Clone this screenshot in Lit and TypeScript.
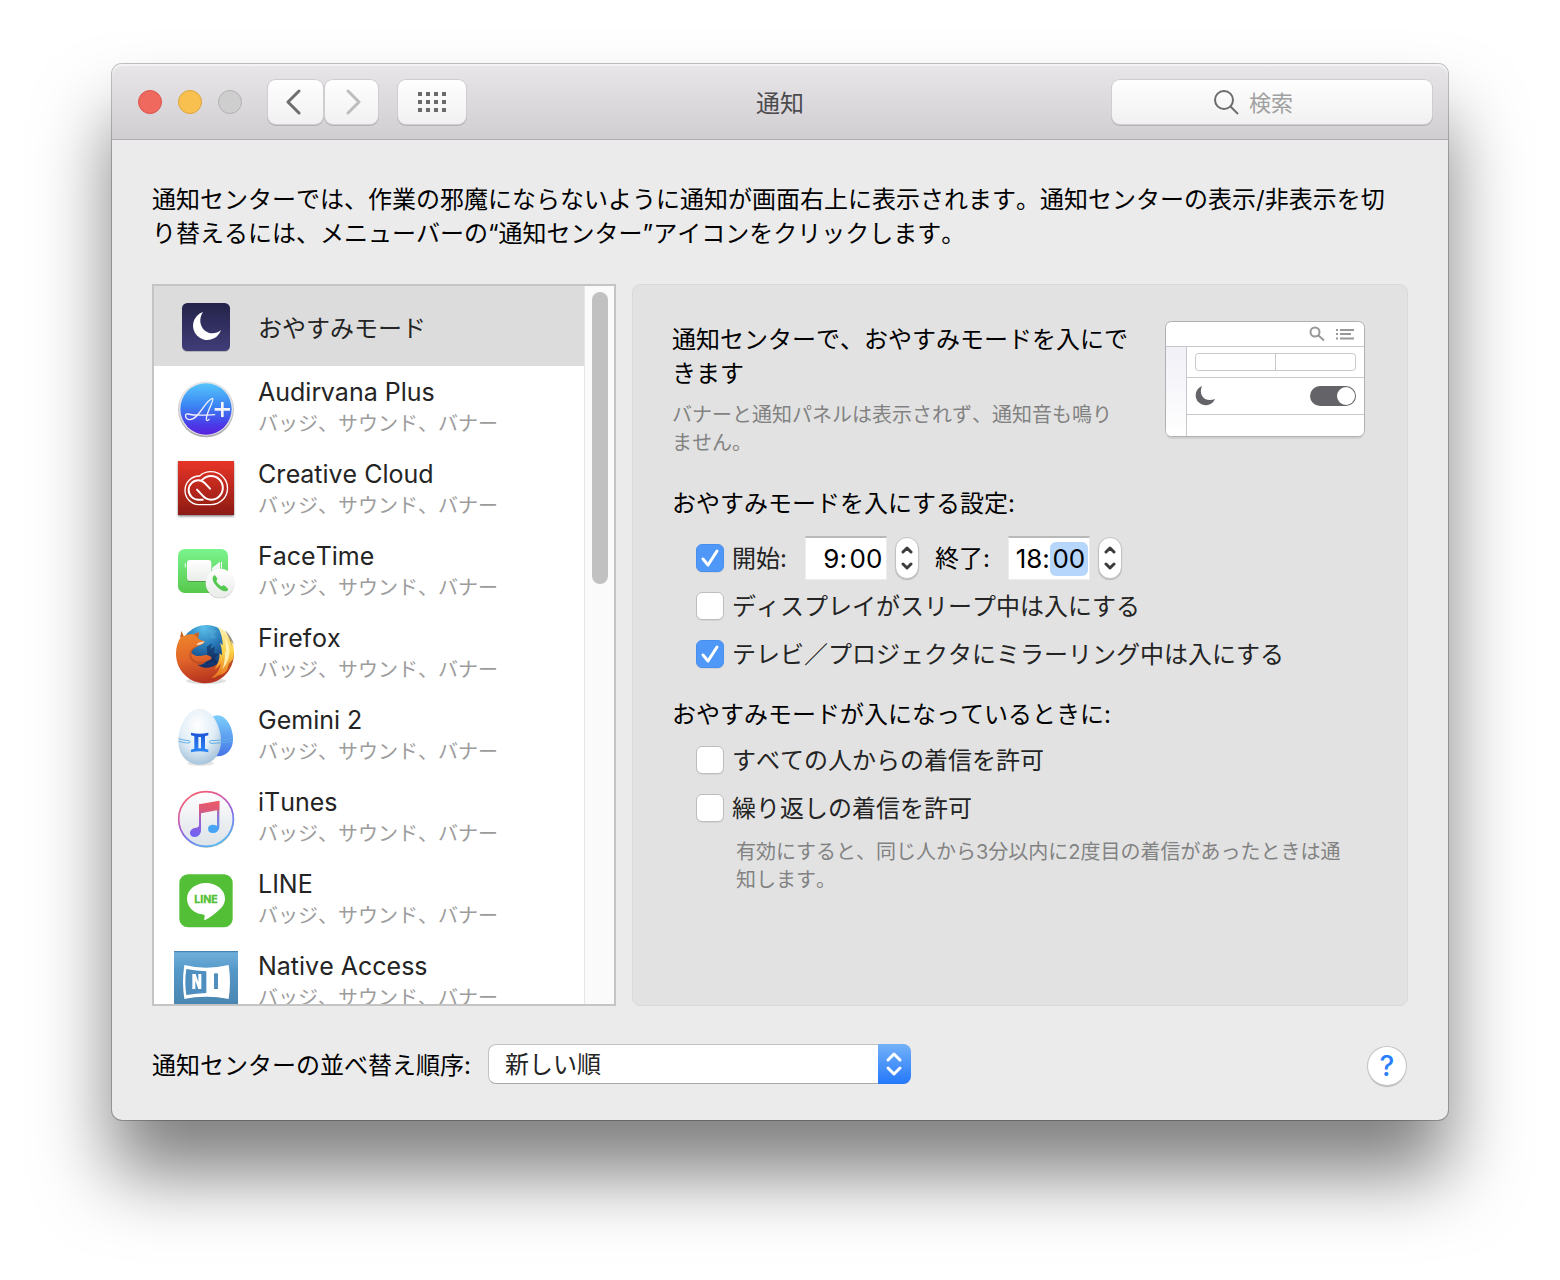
import { LitElement, html, css, svg } from "lit";
import { customElement, state } from "lit/decorators.js";

const icons: Record<string, unknown> = {
  dnd: svg`
    <svg viewBox="72 45 192 192" aria-hidden="true">
      <defs>
        <linearGradient id="dnd-bg" x1="0" y1="0" x2="0" y2="1">
          <stop offset="0" stop-color="#24234a" /><stop offset="1" stop-color="#403d78" />
        </linearGradient>
      </defs>
      <rect x="96" y="72" width="144" height="144" rx="16" fill="#000" opacity=".18" />
      <rect x="96" y="69" width="144" height="144" rx="16" fill="url(#dnd-bg)" />
      <path d="M159 96a43 43 0 1 0 54 54c-14 12-34 13-48 2c-16-13-19-37-6-56z" fill="#fff" />
    </svg>`,
  audirvana: svg`
    <svg viewBox="72 291 192 192" aria-hidden="true">
      <defs>
        <linearGradient id="au-bg" x1="0" y1="0" x2="0" y2="1">
          <stop offset="0" stop-color="#55c5fb" /><stop offset=".45" stop-color="#3b83f3" />
          <stop offset=".8" stop-color="#4a3be8" /><stop offset="1" stop-color="#5a22dc" />
        </linearGradient>
        <linearGradient id="au-ring" x1="0" y1="0" x2="0" y2="1">
          <stop offset="0" stop-color="#ededed" /><stop offset="1" stop-color="#a9a9ad" />
        </linearGradient>
      </defs>
      <circle cx="168" cy="388" r="84" fill="url(#au-ring)" />
      <circle cx="168" cy="386" r="81" fill="#e4e4e8" />
      <circle cx="168" cy="387" r="77" fill="url(#au-bg)" />
      <path d="M194 404c-28 2-60 3-80-2c-12-3-9 17 6 17c26 0 46-60 68-64c6 4-19 42-19 62c0 6 4 6 8 1" fill="none" stroke="#f0f0fa" stroke-width="4" stroke-linecap="round" stroke-linejoin="round" />
      <path d="M194 388h46M217 366v45" stroke="#f4f4f8" stroke-width="8" />
    </svg>`,
  cc: svg`
    <svg viewBox="72 537 192 192" aria-hidden="true">
      <defs>
        <linearGradient id="cc-bg" x1="0" y1="0" x2="0" y2="1">
          <stop offset="0" stop-color="#e83427" /><stop offset="1" stop-color="#8c1b13" />
        </linearGradient>
        <filter id="cc-sh" x="-10%" y="-10%" width="120%" height="125%">
          <feDropShadow dx="0" dy="4" stdDeviation="3" flood-opacity=".5" />
        </filter>
      </defs>
      <rect x="84" y="543" width="168" height="162" fill="url(#cc-bg)" filter="url(#cc-sh)" />
      <g fill="none" stroke="#fff" stroke-linecap="round">
        <path d="M147 674a43 43 0 1 1 2-86c8-8 20-13 34-13a49 49 0 0 1 0 99z" stroke-width="4" />
        <path d="M158 659h-13a29 29 0 1 1 0-58c10 0 15 4 21 10l14 15" stroke-width="6" />
        <path d="M155 601c8-9 17-13 28-13a35 35 0 0 1 0 71c-11 0-19-5-25-12l-17-18" stroke-width="6" />
      </g>
    </svg>`,
  facetime: svg`
    <svg viewBox="72 33 192 192" aria-hidden="true">
      <defs>
        <linearGradient id="ft-bg" x1="0" y1="0" x2="0" y2="1">
          <stop offset="0" stop-color="#7af48d" /><stop offset="1" stop-color="#58c84c" />
        </linearGradient>
        <linearGradient id="ft-cam" x1="0" y1="0" x2="0" y2="1">
          <stop offset="0" stop-color="#fff" /><stop offset="1" stop-color="#e9ece9" />
        </linearGradient>
        <filter id="ft-sh" x="-20%" y="-20%" width="140%" height="140%">
          <feDropShadow dx="0" dy="2" stdDeviation="2" flood-opacity=".35" />
        </filter>
      </defs>
      <rect x="84" y="57" width="150" height="132" rx="20" fill="url(#ft-bg)" />
      <path d="M106 100v12" stroke="#fff" stroke-width="3" />
      <g fill="url(#ft-cam)">
        <rect x="111" y="90" width="73" height="63" rx="9" filter="url(#ft-sh)" />
        <path d="M186 114l24-19v40h-24z" />
        <path d="M213 96h3v24h-3z" />
        <circle cx="210" cy="159" r="43" filter="url(#ft-sh)" />
      </g>
      <path d="M190 139c-6 8 1 21 11 31s23 17 31 12c3-2 3-5 0-8l-8-7c-3-2-5-1-8 2c-6-1-15-10-17-17c3-3 4-5 2-8l-5-7c-2-3-4-1-6 2z" fill="#55c850" />
    </svg>`,
  firefox: svg`
    <svg viewBox="0 3 192 192" aria-hidden="true">
      <defs>
        <radialGradient id="fx-globe" cx=".45" cy=".05" r=".85">
          <stop offset="0" stop-color="#5cc0ea" /><stop offset=".4" stop-color="#2b7fbd" />
          <stop offset=".75" stop-color="#164680" /><stop offset="1" stop-color="#101d50" />
        </radialGradient>
        <linearGradient id="fx-body" x1="0" y1="0" x2=".2" y2="1">
          <stop offset="0" stop-color="#ef8a2a" /><stop offset=".55" stop-color="#e2662a" />
          <stop offset="1" stop-color="#b8361f" />
        </linearGradient>
        <linearGradient id="fx-tail" x1="0" y1="0" x2="0" y2="1">
          <stop offset="0" stop-color="#fdf3c0" /><stop offset=".5" stop-color="#fbd044" />
          <stop offset="1" stop-color="#e8701f" />
        </linearGradient>
      </defs>
      <ellipse cx="96" cy="177" rx="60" ry="10" fill="#000" opacity=".12" />
      <circle cx="97" cy="88" r="79" fill="url(#fx-globe)" />
      <path d="M98 74l16-10l-5 16l14-6l-4 20l16 2l-12 12l4 16l-16-4l-16 8l6-20z" fill="#0e1c4c" opacity=".5" />
      <path d="M100 26l16-6l12 8l-8 10l10 8l-14 6l-10-8l4-8z" fill="#63b5dd" opacity=".3" />
      <path d="M22 27l7 16c10-6 20-7 30-6l16-6l-3 18c6 5 13 7 20 9c-2 8-11 11-20 14c-10 4-18 11-20 20c8 10 20 12 32 9c12-4 23-3 29 6c-3 9-12 7-19 13c-7 8-16 9-24 8c24 17 58 12 74-22c8-19 8-40 4-58c18 14 30 33 32 52c-4 48-40 84-84 84c-51 0-90-39-90-89c0-20 5-35 14-49z" fill="url(#fx-body)" />
      <path d="M130 13c31 14 50 43 50 76c0 28-13 52-34 68l-18 9l-16 2c18-13 26-26 28-44c-5 8-10 14-18 18c10-16 15-30 15-48l7 6c0-15-2-28-6-38l8 8c0-20-5-39-16-57z" fill="url(#fx-tail)" />
      <path d="M152 46c13 18 18 38 12 60c-4 16-10 27-19 36c7-18 9-38 7-54l4 4c0-16-1-31-4-46z" fill="#fff6bf" opacity=".85" />
      <path d="M153 24c14 13 23 28 27 44l-9-11l3 17c-5-19-12-33-21-50z" fill="#3d3d46" opacity=".5" />
      <path d="M178 110l-7 20l-13 17l7-22zM146 156l-12 11l-16 6l12-12z" fill="#a63a20" opacity=".8" />
      <path d="M73 62l18-4c-1 6-7 9-16 10l-8 1z" fill="#f8dcc0" />
      <path d="M18 46l4-19l7 16zM59 37l16-6l-3 18c-4-6-8-9-13-12z" fill="#b9521f" opacity=".7" />
      <path d="M72 72c-16 3-27 13-26 28c1 12 10 23 24 25c10 2 18-1 24-8c-12 4-26 3-34-4c-7-6-9-13-8-21c3-9 10-15 20-20z" fill="#a63b1a" opacity=".45" />
    </svg>`,
  gemini: svg`
    <svg viewBox="72 525 192 192" aria-hidden="true">
      <defs>
        <linearGradient id="gm-back" x1="0" y1="0" x2="0" y2="1">
          <stop offset="0" stop-color="#7ccffb" /><stop offset="1" stop-color="#4474e8" />
        </linearGradient>
        <radialGradient id="gm-front" cx=".45" cy=".3" r=".75">
          <stop offset="0" stop-color="#fff" /><stop offset=".55" stop-color="#e1eef7" />
          <stop offset="1" stop-color="#9fbdd6" />
        </radialGradient>
        <linearGradient id="gm-sign" x1="0" y1="0" x2="0" y2="1">
          <stop offset="0" stop-color="#1f55d8" /><stop offset="1" stop-color="#2a86f6" />
        </linearGradient>
      </defs>
      <ellipse cx="152" cy="700" rx="40" ry="8" fill="#000" opacity=".1" />
      <path d="M202 556c27 0 47 37 47 72c0 30-19 51-46 51c-26 0-46-21-46-51c0-35 19-72 45-72z" fill="url(#gm-back)" />
      <path d="M149 536c36 0 64 52 64 97c0 44-28 71-64 71s-64-27-64-71c0-45 28-97 64-97z" fill="url(#gm-front)" />
      <g fill="none" stroke="#64aee8" stroke-width="3">
        <path d="M86 626c10 4 20 5 32 6q4 3 0 7c-12 0-22-2-32-5" />
        <path d="M249 624c-22 6-44 7-68 8q-6 3 0 8c24 0 46-2 68-8" />
      </g>
      <path d="M123 608q26 6 52 0v8q-5 2-10 3v37q5 1 10 3v8q-26-6-52 0v-8q5-2 10-3v-37q-5-1-10-3z" fill="url(#gm-sign)" />
      <path d="M145 621h8v34h-8z" fill="#e6f1fa" />
    </svg>`,
  itunes: svg`
    <svg viewBox="72 21 192 192" aria-hidden="true">
      <defs>
        <linearGradient id="it-ring" x1=".25" y1="0" x2=".75" y2="1">
          <stop offset="0" stop-color="#f4606a" /><stop offset=".3" stop-color="#d65aa8" />
          <stop offset=".6" stop-color="#7d6bf0" /><stop offset="1" stop-color="#4cc3f4" />
        </linearGradient>
        <linearGradient id="it-bg" x1="0" y1="0" x2="0" y2="1">
          <stop offset="0" stop-color="#fefefe" /><stop offset="1" stop-color="#dde3e8" />
        </linearGradient>
        <linearGradient id="it-note" gradientUnits="userSpaceOnUse" x1="180" y1="64" x2="160" y2="172">
          <stop offset="0" stop-color="#ea5a68" /><stop offset=".25" stop-color="#dc5a78" />
          <stop offset=".6" stop-color="#9a5fd0" /><stop offset="1" stop-color="#6f62f6" />
        </linearGradient>
        <linearGradient id="it-note2" gradientUnits="userSpaceOnUse" x1="200" y1="64" x2="196" y2="160">
          <stop offset="0" stop-color="#e85a6a" /><stop offset=".5" stop-color="#8a78d8" />
          <stop offset="1" stop-color="#3fa8f6" />
        </linearGradient>
      </defs>
      <circle cx="169" cy="120" r="84" fill="#000" opacity=".22" />
      <circle cx="168" cy="117" r="82" fill="url(#it-bg)" stroke="url(#it-ring)" stroke-width="5" />
      <path d="M201 90v44c0 6-3 8-9 9c-10 1-17 7-17 16c0 0 0 0 0 0c0-7 1-7 1-8c0 5 5 8 13 8c11 0 19-8 19-19V62z" fill="url(#it-note2)" />
      <ellipse cx="189" cy="146" rx="15" ry="12" fill="#48a4f4" />
      <path d="M147 73l61-11v27l-55 11v51c0 11-8 20-19 20c-9 0-14-5-14-12c0-9 8-15 18-16c6-1 9-3 9-9z" fill="url(#it-note)" />
    </svg>`,
  line: svg`
    <svg viewBox="72 267 192 192" aria-hidden="true">
      <rect x="88" y="283" width="160" height="159" rx="26" fill="#53bf36" />
      <path d="M168 309c32 0 57 21 57 47c0 15-9 27-24 39c-12 10-24 19-36 25c-4 1-2-5-1-10c1-5-2-6-8-7c-26-4-45-24-45-47c0-26 25-47 57-47z" fill="#fff" />
      <text x="168" y="369" text-anchor="middle" class="line-mark">LINE</text>
    </svg>`,
  ni: svg`
    <svg viewBox="72 513 192 192" aria-hidden="true">
      <defs>
        <linearGradient id="ni-bg" x1="0" y1="0" x2="0" y2="1">
          <stop offset="0" stop-color="#72b0dc" /><stop offset=".3" stop-color="#5598c8" />
          <stop offset="1" stop-color="#4580aa" />
        </linearGradient>
      </defs>
      <rect x="72" y="513" width="192" height="192" rx="4" fill="url(#ni-bg)" />
      <path d="M72 515h192" stroke="#3d77a5" stroke-width="3" />
      <path d="M103 560q65 16 133 0q8 49 0 98q-68-14-133 0q-8-49 0-98z" fill="#27567a" opacity=".35" />
      <path d="M103 555q65 16 133 0q8 51 0 102q-68-14-133 0q-8-51 0-102z" fill="#fff" />
      <path d="M109 567q30 6 60 7v65q-30 1-60 6q-6-39 0-78z" fill="#4f8fbf" />
      <path d="M127 582h10l8 24v-24h9v45h-9l-9-25v25h-9z" fill="#fff" />
      <path d="M192 580h12v47h-12z" fill="#4f8fbf" />
    </svg>`,
};

const SUBTITLE = "バッジ、サウンド、バナー";

const apps = [
  { icon: "dnd", name: "おやすみモード", sub: "" },
  { icon: "audirvana", name: "Audirvana Plus", sub: SUBTITLE },
  { icon: "cc", name: "Creative Cloud", sub: SUBTITLE },
  { icon: "facetime", name: "FaceTime", sub: SUBTITLE },
  { icon: "firefox", name: "Firefox", sub: SUBTITLE },
  { icon: "gemini", name: "Gemini 2", sub: SUBTITLE },
  { icon: "itunes", name: "iTunes", sub: SUBTITLE },
  { icon: "line", name: "LINE", sub: SUBTITLE },
  { icon: "ni", name: "Native Access", sub: SUBTITLE },
];

@customElement("app-root")
export class AppRoot extends LitElement {
  @state() private selected = 0;

  static styles = css`
    :host {
      display: block;
      min-height: 100vh;
      box-sizing: border-box;
      padding: 64px 112px 160px;
      background: #fff;
      overflow: hidden;
      color: #000;
      font: 24px/34px Inter, "Noto Sans CJK JP", sans-serif;
      font-kerning: none;
    }
    *, *::before, *::after { box-sizing: border-box; }
    button, input, select { margin: 0; padding: 0; border: 0; font: inherit; font-kerning: none; color: inherit; outline: 0; }
    h1, h2, p, ul { margin: 0; padding: 0; font-weight: 400; }
    h1, h2 { font-size: 24px; }
    svg { display: block; }

    .window {
      border-radius: 10px;
      background: #ebebeb;
      box-shadow: 0 0 0 1px rgba(0, 0, 0, .24), 0 54px 74px rgba(0, 0, 0, .5);
    }
    .titlebar {
      display: grid;
      grid-template-columns: 1fr auto 1fr;
      align-items: center;
      height: 76px;
      padding: 0 16px;
      border-bottom: 1px solid #aeacaf;
      border-radius: 10px 10px 0 0;
      background: linear-gradient(#e8e6e9, #d1ced2);
      box-shadow: inset 0 2px 0 #f4f3f4;
    }
    .tools { display: flex; align-items: center; padding-left: 10px; }
    .lights { display: flex; gap: 16px; margin-right: 26px; }
    .light { width: 24px; height: 24px; border-radius: 50%; border: 1px solid; }
    .light.close { background: #f0695f; border-color: #d9544b; }
    .light.min { background: #f7c04f; border-color: #dca63b; }
    .light.zoom { background: #cecece; border-color: #b2b1b3; }
    .tool {
      display: grid;
      place-items: center;
      height: 44px;
      border-radius: 8px;
      background: linear-gradient(#fefefe, #f1f1f1);
      box-shadow: 0 0 0 1px #cfcdd0, 0 1px 0 1px #b5b3b6;
    }
    .nav { display: flex; gap: 2px; margin-right: 20px; }
    .nav .tool { width: 55px; padding-right: 3px; }
    .nav .tool + .tool { width: 53px; padding: 0 0 0 2px; }
    .all { width: 68px; }
    .title { color: #4c4b4d; line-height: 44px; padding-top: 4px; }
    .search {
      justify-self: end;
      display: flex;
      align-items: center;
      gap: 10px;
      width: 320px;
      height: 44px;
      padding-left: 101px;
      border-radius: 8px;
      background: linear-gradient(#fefefe, #f1f1f1);
      box-shadow: 0 0 0 1px #cfcdd0, 0 1px 0 1px #b5b3b6;
    }
    .search svg { flex: none; }
    .search input { flex: 1; min-width: 0; height: 44px; padding-top: 2px; background: none; font-size: 22px; }
    .search input::placeholder { color: #a0a0a0; opacity: 1; }

    .body { padding: 43px 40px 34px; }
    .intro { padding-right: 16px; }
    .columns { display: flex; gap: 16px; margin: 33px 0 38px; }

    .list {
      flex: none;
      display: flex;
      width: 464px;
      height: 722px;
      border: 2px solid #c4c4c4;
      background: #fff;
      overflow: hidden;
    }
    .rows { flex: 1; display: grid; grid-auto-rows: 80px; gap: 2px; list-style: none; overflow: hidden; }
    .row {
      display: flex;
      align-items: center;
      gap: 20px;
      width: 100%;
      height: 80px;
      padding: 2px 0 0 20px;
      background: none;
      text-align: left;
      color: #242424;
    }
    .row.on { background: #dcdcdc; }
    .icon { flex: none; width: 64px; height: 64px; }
    .name { display: block; line-height: 32px; }
    .one { padding-top: 4px; }
    .two { align-self: flex-start; padding-top: 6px; }
    .two .name { font-size: 25px; }
    .sub { display: block; font-size: 20px; line-height: 32px; color: #9c9c9c; }
    .line-mark { font: 700 32px Inter, sans-serif; fill: #53bf36; stroke: #53bf36; stroke-width: 1px; }
    .track {
      width: 30px;
      padding: 6px 6px 6px 7px;
      border-left: 1px solid #e6e6e6;
      background: #fafafa;
    }
    .thumb { width: 16px; height: 292px; border-radius: 8px; background: #c1c1c1; }

    .panel {
      flex: 1;
      min-width: 0;
      padding: 36px 42px 36px 39px;
      border: 1px solid #dadada;
      border-radius: 8px;
      background: #e2e2e2;
    }
    .lead { display: flex; gap: 36px; align-items: flex-start; }
    .lead-text { flex: 1; min-width: 0; padding-top: 2px; }
    .note { font-size: 20px; line-height: 28px; color: #828282; }
    .lead .note { margin-top: 10px; }
    .preview { flex: none; }
    .group { margin-top: 30px; }
    .group + .group { margin-top: 20px; }
    .options { padding: 13px 0 0 24px; }
    .options.tight { padding-top: 4px; }
    .option { display: flex; align-items: center; height: 48px; color: #242424; }
    .check { display: flex; align-items: center; gap: 8px; }
    .caption { padding-top: 2px; }
    .check input {
      appearance: none;
      width: 28px;
      height: 28px;
      border-radius: 6px;
      border: 1px solid #bdbdbd;
      background: #fff;
      box-shadow: 0 1px 0 rgba(0, 0, 0, .06);
    }
    .check input:checked { border-color: #458fee; background: #4f98f7; }
    .box { display: grid; }
    .box > * { grid-area: 1 / 1; }
    .box svg { pointer-events: none; visibility: hidden; }
    .box input:checked + svg { visibility: visible; }

    .time {
      display: flex;
      align-items: center;
      justify-content: flex-end;
      width: 82px;
      height: 44px;
      margin: 0 8px 0 18px;
      padding-right: 1px;
      border: 1px solid #ededed;
      border-top: 2px solid #b9b9b9;
      background: #fff;
      color: #000;
      font-size: 26px;
    }
    .time input { width: 32px; height: 34px; background: none; text-align: right; }
    .time .minute { width: 38px; text-align: center; border-radius: 6px; }
    .time .minute.on { background: #b7d6fb; }
    .stepper {
      width: 24px;
      height: 42px;
      padding: 4px 0;
      display: flex;
      flex-direction: column;
      border-radius: 12px;
      background: #fff;
      border: 1px solid #c2c2c2;
      box-shadow: 0 1px 1px rgba(0, 0, 0, .2);
    }
    .stepper button { flex: 1; display: grid; place-items: center; background: none; }
    .until { margin-left: 16px; padding-top: 2px; color: #000; }
    .hint { padding: 6px 16px 0 64px; }

    .footer { display: flex; align-items: flex-start; height: 42px; }
    .footer label { line-height: 40px; padding-top: 2px; margin-right: 17px; }
    .popup { display: grid; width: 423px; height: 40px; }
    .popup > * { grid-area: 1 / 1; }
    .popup select {
      appearance: none;
      width: 100%;
      height: 40px;
      padding: 2px 0 0 16px;
      border: 1px solid #c2c2c2;
      border-bottom-color: #a8a8a8;
      border-radius: 8px;
      background: #fff;
      color: #242424;
    }
    .cap {
      justify-self: end;
      width: 33px;
      height: 40px;
      display: grid;
      place-items: center;
      border-radius: 0 8px 8px 0;
      background: linear-gradient(#73b1f8, #2478fb);
      pointer-events: none;
    }
    .help {
      align-self: flex-end;
      width: 38px;
      height: 38px;
      margin: 0 2px 1px auto;
      border-radius: 50%;
      background: #fff;
      color: #2a7fff;
      font-size: 28px;
      font-weight: 500;
      line-height: 38px;
      box-shadow: 0 0 0 1px #c4c4c4, 0 2px 1px #b5b5b5;
    }
  `;

  private checkbox(label: string, checked: boolean) {
    return html`<label class="check">
      <span class="box">
        <input type="checkbox" .checked=${checked} />
        <svg width="28" height="28" viewBox="0 0 28 28" fill="none" stroke="#fff" stroke-width="3" stroke-linecap="round" stroke-linejoin="round" aria-hidden="true"><path d="M7 15l5 6l9-14" /></svg>
      </span>
      <span class="caption">${label}</span>
    </label>`;
  }

  private time(label: string, hour: string, minute: string, active: boolean) {
    return html`
      <span class="time" role="group" aria-label=${label}>
        <input class="hour" aria-label="時" .value=${hour} />:<input class="minute ${active ? "on" : ""}" aria-label="分" .value=${minute} />
      </span>
      <span class="stepper">
        <button aria-label="増やす"><svg width="14" height="8" viewBox="0 0 14 8" fill="none" stroke="#3c3c3c" stroke-width="3" stroke-linecap="round" stroke-linejoin="round"><path d="M3 6l4-4l4 4" /></svg></button>
        <button aria-label="減らす"><svg width="14" height="8" viewBox="0 0 14 8" fill="none" stroke="#3c3c3c" stroke-width="3" stroke-linecap="round" stroke-linejoin="round"><path d="M3 2l4 4l4-4" /></svg></button>
      </span>`;
  }

  private preview() {
    return html`<svg class="preview" width="200" height="120" viewBox="0 0 200 120" aria-hidden="true">
      <defs>
        <linearGradient id="pv-side" x1="0" y1="0" x2="0" y2="1"><stop offset="0" stop-color="#f1f0f7" /><stop offset="1" stop-color="#fff" /></linearGradient>
      </defs>
      <rect x="1" y="2" width="198" height="116" rx="6" fill="#000" opacity=".08" />
      <rect x=".5" y=".5" width="199" height="115" rx="6" fill="#fff" stroke="#b0b0b2" />
      <path d="M1 26h20v89H6a5 5 0 0 1-5-5z" fill="url(#pv-side)" />
      <g fill="none" stroke="#c8c8cc">
        <path d="M1 25.5h198M21.5 26v89M22 56.5h177M22 93.5h177M110.500 32v17" />
        <rect x="30.500" y="32.500" width="160" height="17" rx="3" />
      </g>
      <g fill="none" stroke="#98989b" stroke-width="2">
        <circle cx="150" cy="11" r="4.500" /><path d="M153 14l6 5.500" />
        <path d="M175 9h14M175 13h11M175 17.500h14M171 9h2M171 13h2M171 17.500h2" />
      </g>
      <path d="M37 65a10 10 0 1 0 13 13c-10 4-17-4-13-13z" fill="#646368" />
      <rect x="145" y="65" width="46" height="20" rx="10" fill="#646368" />
      <circle cx="181" cy="75" r="9" fill="#fff" />
    </svg>`;
  }

  render() {
    return html`
      <main class="window">
        <header class="titlebar">
          <div class="tools">
            <div class="lights">
              <button class="light close" aria-label="閉じる"></button>
              <button class="light min" aria-label="しまう"></button>
              <button class="light zoom" aria-label="拡大" disabled></button>
            </div>
            <div class="nav">
              <button class="tool" aria-label="戻る"><svg width="16" height="26" viewBox="0 0 16 26" fill="none" stroke="#6e6e6e" stroke-width="3" stroke-linecap="round" stroke-linejoin="round"><path d="M13 2L2 13l11 11" /></svg></button>
              <button class="tool" aria-label="進む" disabled><svg width="16" height="26" viewBox="0 0 16 26" fill="none" stroke="#bdbdbd" stroke-width="3" stroke-linecap="round" stroke-linejoin="round"><path d="M3 2l11 11L3 24" /></svg></button>
            </div>
            <button class="tool all" aria-label="すべてを表示">
              <svg width="28" height="20" viewBox="0 0 28 20" fill="#6a6a6a">
                ${[0, 8, 16].map((y) => [0, 8, 16, 24].map((x) => svg`<rect x=${x} y=${y} width="4" height="4" />`))}
              </svg>
            </button>
          </div>
          <h1 class="title">通知</h1>
          <label class="search">
            <svg width="26" height="26" viewBox="0 0 26 26" fill="none" stroke="#6c6c6c" stroke-width="2" aria-hidden="true"><circle cx="11" cy="11" r="9" /><path d="M17 17l8 8" /></svg>
            <input type="text" placeholder="検索" aria-label="検索" />
          </label>
        </header>

        <div class="body">
          <p class="intro">通知センターでは、作業の邪魔にならないように通知が画面右上に表示されます。通知センターの表示/非表示を切り替えるには、メニューバーの“通知センター”アイコンをクリックします。</p>

          <div class="columns">
            <div class="list">
              <ul class="rows">
                ${apps.map((a, i) => html`<li>
                  <button class="row ${i === this.selected ? "on" : ""}" @click=${() => (this.selected = i)}>
                    <span class="icon">${icons[a.icon]}</span>
                    ${a.sub
                      ? html`<span class="two"><span class="name">${a.name}</span><span class="sub">${a.sub}</span></span>`
                      : html`<span class="one"><span class="name">${a.name}</span></span>`}
                  </button>
                </li>`)}
              </ul>
              <div class="track"><div class="thumb"></div></div>
            </div>

            <section class="panel">
              <div class="lead">
                <div class="lead-text">
                  <h2>通知センターで、おやすみモードを入にできます</h2>
                  <p class="note">バナーと通知パネルは表示されず、通知音も鳴りません。</p>
                </div>
                ${this.preview()}
              </div>

              <div class="group">
                <h2>おやすみモードを入にする設定:</h2>
                <div class="options">
                  <div class="option">
                    ${this.checkbox("開始:", true)}
                    ${this.time("開始", "9", "00", false)}
                    <span class="until">終了:</span>
                    ${this.time("終了", "18", "00", true)}
                  </div>
                  <div class="option">${this.checkbox("ディスプレイがスリープ中は入にする", false)}</div>
                  <div class="option">${this.checkbox("テレビ／プロジェクタにミラーリング中は入にする", true)}</div>
                </div>
              </div>

              <div class="group">
                <h2>おやすみモードが入になっているときに:</h2>
                <div class="options tight">
                  <div class="option">${this.checkbox("すべての人からの着信を許可", false)}</div>
                  <div class="option">${this.checkbox("繰り返しの着信を許可", false)}</div>
                </div>
                <p class="note hint">有効にすると、同じ人から3分以内に2度目の着信があったときは通知します。</p>
              </div>
            </section>
          </div>

          <footer class="footer">
            <label for="order">通知センターの並べ替え順序:</label>
            <span class="popup">
              <select id="order"><option>新しい順</option><option>手動</option></select>
              <span class="cap"><svg width="18" height="26" viewBox="0 0 18 26" fill="none" stroke="#fff" stroke-width="3" stroke-linecap="round" stroke-linejoin="round" aria-hidden="true"><path d="M3 9l6-6l6 6M3 17l6 6l6-6" /></svg></span>
            </span>
            <button class="help" aria-label="ヘルプ">?</button>
          </footer>
        </div>
      </main>
    `;
  }
}
